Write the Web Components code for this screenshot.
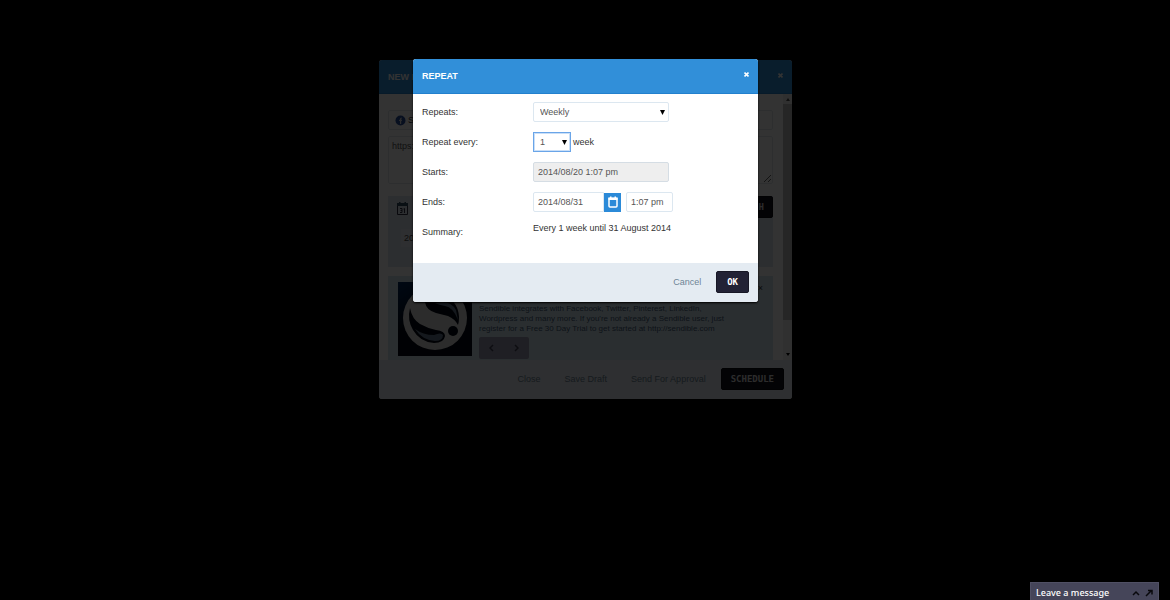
<!DOCTYPE html>
<html lang="en">
<head>
<meta charset="utf-8">
<title>Repeat</title>
<style>
html, body { margin: 0; background: #000; }
body { font: 9px/12px "Liberation Sans", Arial, sans-serif; color: #333; }
</style>
</head>
<body>
<schedule-page></schedule-page>
<script>
const define = (name, html) => customElements.define(name, class extends HTMLElement {
  constructor() {
    super();
    const t = document.createElement("template");
    t.innerHTML = html;
    this.attachShadow({ mode: "open" }).append(t.content.cloneNode(true));
  }
});

/* Dialog shell: blue title bar, body, pale footer */
define("app-dialog", `
<style>
:host { display: flex; flex-direction: column; box-sizing: border-box; border-radius: 3px; overflow: hidden; background: #fff; }
header { display: flex; justify-content: space-between; align-items: flex-start; box-sizing: border-box; height: var(--head, 35px); padding: 11px 9px 0; background: #318fd9; color: #fff; border-bottom: 1px solid #2380cd; }
h2 { margin: 0; font: bold 9px/12px "Liberation Sans", Arial, sans-serif; }
header button { display: block; border: 0; padding: 1px 0 0; background: none; color: #fff; }
header svg { display: block; }
main { flex: 1; min-height: 0; display: flex; flex-direction: column; }
footer { display: flex; align-items: center; justify-content: flex-end; box-sizing: border-box; height: 39px; background: #e4ebf2; padding: 0 var(--end, 9px) 1px; }
</style>
<header><h2><slot name="title"></slot></h2><button aria-label="Close"><svg width="5" height="7"><path d="M.5 1.500l4 4M4.500 1.500l-4 4" stroke="#fff" stroke-width="1.600"/></svg></button></header>
<main><slot></slot></main>
<footer><slot name="footer"></slot></footer>`);

define("dark-button", `
<style>
:host { display: block; }
button { display: block; height: 22px; border: 1px solid #171725; border-radius: 2px; background: #222235; color: #fff; padding: 0 var(--pad, 9px); font: bold 9px/12px "DejaVu Sans Mono", monospace; }
:host([dim]) button { background: #12121c; border-color: #0a0a10; color: #ddd; }
</style><button><slot></slot></button>`);

define("text-button", `
<style>button { border: 0; padding: 0; background: none; color: #6e8495; font: 9px/12px "Liberation Sans", Arial, sans-serif; }</style>
<button><slot></slot></button>`);

define("repeat-form", `
<style>
:host { display: block; padding: 8px 9px 0; }
form { display: grid; grid-template-columns: 111px 1fr; grid-auto-rows: 20px; row-gap: 10px; align-items: center; }
.row { display: flex; align-items: center; }
input, select { box-sizing: border-box; height: 20px; margin: 0; border: 1px solid #dce7f0; border-radius: 2px; background: #fff; color: #555; padding: 0 4px; font: 9px/12px "Liberation Sans", Arial, sans-serif; outline: 0; }
select { appearance: none; padding: 0 6px; }
.select { position: relative; display: flex; }
.select svg { position: absolute; right: 4px; top: 8px; pointer-events: none; }
.wide { width: 136px; }
#every { width: 38px; border-color: #6aa5e8; box-shadow: inset 0 0 0 1px #c9dff8; border-radius: 0; }
.unit { margin-left: 2px; }
#starts { background: #eee; border-color: #d5dde4; }
#ends { width: 71px; border-radius: 2px 0 0 2px; }
.pick { width: 17px; height: 19px; border: 0; padding: 0; margin-right: 5px; background: #2b8ad8; display: grid; place-items: center; }
#time { width: 47px; }
output { align-self: start; }
svg { display: block; }
</style>
<form>
<label for="repeats">Repeats:</label>
<div class="row"><span class="select"><select id="repeats" class="wide"><option>Weekly</option></select><svg width="5" height="5"><path d="M0 0h5L2.500 5z"/></svg></span></div>
<label for="every">Repeat every:</label>
<div class="row"><span class="select"><select id="every"><option>1</option></select><svg width="5" height="5"><path d="M0 0h5L2.500 5z"/></svg></span><span class="unit">week</span></div>
<label for="starts">Starts:</label>
<div class="row"><input id="starts" class="wide" value="2014/08/20 1:07 pm" readonly></div>
<label for="ends">Ends:</label>
<div class="row"><input id="ends" value="2014/08/31"><button type="button" class="pick" aria-label="Pick a date"><svg width="10" height="12" viewBox="0 0 10 12"><path d="M1 2.500h8v7.500q0 1-1 1H2q-1 0-1-1z" fill="none" stroke="#fff" stroke-width="1.500"/><path d="M.5 1.500h9v2.500h-9zM2 .5h1.500v2H2zM6.500 .5H8v2H6.500z" fill="#fff"/></svg></button><input id="time" aria-label="End time" value="1:07 pm"></div>
<label for="summary">Summary:</label>
<output id="summary">Every 1 week until 31 August 2014</output>
</form>`);

define("message-form", `
<style>
:host { flex: 1; min-height: 0; display: flex; }
.content { flex: 1; min-width: 0; overflow: hidden; padding: 16px 10px 0 9px; display: flex; flex-direction: column; }
.content > * { box-sizing: border-box; flex: none; }
.services { height: 20px; border: 1px solid #e0e5ea; border-radius: 2px; padding: 0 6px; display: flex; align-items: center; gap: 2px; }
textarea { height: 48px; margin: 6px 0 0; border: 1px solid #e0e5ea; border-radius: 2px; padding: 3px; background: none; color: #555; font: 9px/12px "Liberation Sans", Arial, sans-serif; resize: vertical; }
.schedule { height: 71px; margin-top: 12px; background: #dce4ee; display: flex; justify-content: space-between; align-items: flex-start; padding: 0 0 0 9px; }
.schedule svg { display: block; margin-top: 6px; }
.date { margin: 14px 0 0 4px; padding: 3px; background: #e6ebf2; color: #444; }
.preview { height: 86px; margin-top: 9px; background: #d3e6f0; display: flex; gap: 7px; padding: 6px 10px 0; }
.text { flex: 1; }
.dismiss { height: 22px; text-align: right; }
p { margin: 0; font-size: 8px; line-height: 10px; color: #47607a; white-space: nowrap; }
.pager { box-sizing: border-box; display: flex; justify-content: space-between; align-items: center; width: 50px; height: 22px; padding: 0 10px; margin-top: 3px; background: #9b9bb2; border-radius: 2px; }
.pager button { border: 0; padding: 0; background: none; height: 8px; }
.pager svg { display: block; }
.bar { width: 9px; background: #f1f1f1; display: flex; flex-direction: column; }
.bar i { height: 10px; display: grid; place-items: center; }
.bar i::after { content: ""; border: 2px solid transparent; border-bottom: 3px solid #505050; border-top: 0; }
.bar i.down { height: 12px; }
.bar i.down::after { border-bottom: 0; border-top: 3px solid #000; }
.thumb { height: 216px; background: #bcbcbc; margin-bottom: auto; }
</style>
<div class="content">
<div class="services"><svg width="11" height="11" viewBox="0 0 11 11"><circle cx="5.500" cy="5.500" r="5" fill="#234b9b"/><path d="M5 9V6H4V4.800h1V4q0-1.600 1.700-1.500v1.200Q6 3.700 6.200 4.800H7L6.800 6h-.6v3z" fill="#ddd"/></svg><span>S</span></div>
<textarea aria-label="Message">https:</textarea>
<div class="schedule"><div><svg width="11" height="13" viewBox="0 0 11 13"><path d="M.5 1.500h10v11H.5z" fill="none" stroke="#303044"/><path d="M0 1h11v3H0zM2 0h1.500v2H2zM7.500 0H9v2H7.500z" fill="#304a60"/><path d="M3 6.500h2v4H3M3.500 8.500H5M6.500 7l1-.5v4.500" fill="none" stroke="#303044"/></svg><div class="date">20</div></div><dark-button dim style="--pad:8px">H</dark-button></div>
<div class="preview">
<svg width="74" height="74" viewBox="0 0 74 74" role="img" aria-label="Sendible"><defs><linearGradient id="n" x2=".6" y2="1"><stop stop-color="#002a60"/><stop offset=".5" stop-color="#020814"/></linearGradient></defs><path fill="url(#n)" d="M0 0h74v74H0z"/><circle cx="37" cy="36" r="32" fill="#ddd"/><path d="M27 20Q29 10 42 12Q60 17 61 35Q61 40 60 43Q57 37 50 34L38 31Q28 28 27 20Z" fill="#020814"/><path d="M37 21Q52 17 58 28L60 38Q55 25 47 24Q41 23 37 21Z" fill="#66798f"/><path d="M12 26Q14 37 22 42Q29 46 38 48Q47 49 47 54Q46 61 36 61Q22 60 15 48Q9 38 12 26Z" fill="#020814"/><path d="M17 47Q25 53 36 53Q43 50 45 53Q45 59 37 59Q24 58 17 47Z" fill="#66798f"/><circle cx="55" cy="49" r="5" fill="#020814"/></svg>
<div class="text"><div class="dismiss">×</div><p>Sendible integrates with Facebook, Twitter, Pinterest, LinkedIn,<br>Wordpress and many more. If you're not already a Sendible user, just<br>register for a Free 30 Day Trial to get started at http://sendible.com</p>
<div class="pager"><button aria-label="Previous"><svg width="5" height="8"><path d="M4 1L1 4l3 3" fill="none" stroke="#444458" stroke-width="1.500"/></svg></button><button aria-label="Next"><svg width="5" height="8"><path d="M1 1l3 3-3 3" fill="none" stroke="#444458" stroke-width="1.500"/></svg></button></div></div>
</div>
</div>
<div class="bar"><i></i><div class="thumb"></div><i class="down"></i></div>`);

define("chat-tab", `
<style>
:host { display: flex; align-items: center; box-sizing: border-box; width: 129px; height: 18px; padding: 0 5px; background: #454559; border: 1px solid #505064; border-bottom: 0; color: #fff; }
span { flex: 1; font: 500 9px/12px "Noto Sans", Verdana, sans-serif; padding-top: 2px; }
button { border: 0; padding: 2px 0 0; margin-left: 5px; background: none; }
svg { display: block; }
</style>
<span>Leave a message</span>
<button aria-label="Expand"><svg width="8" height="8"><path d="M1 6l3-3 3 3" fill="none" stroke="#08080c" stroke-width="1.500"/></svg></button>
<button aria-label="Open in a window"><svg width="8" height="8"><path d="M1 7l5-5M3 1.500h4v4" fill="none" stroke="#08080c" stroke-width="1.500"/></svg></button>`);

define("schedule-page", `
<style>
:host { display: grid; min-height: 100vh; }
.layer { grid-area: 1 / 1; display: flex; justify-content: center; align-items: flex-start; padding: 60px 0 0 1px; }
.front { padding-top: 59px; background: rgba(0,0,0,.8); z-index: 1; }
.message { width: 413px; height: 339px; --head: 34px; --end: 8px; }
.repeat { width: 345px; height: 243px; box-shadow: 0 1px 2px #000; }
chat-tab { position: fixed; right: 11px; bottom: 0; z-index: 2; }
.message text-button { margin-right: 24px; }
.message text-button:nth-of-type(3) { margin-right: 15px; }
.repeat text-button { margin-right: 15px; }
</style>
<div class="layer"><app-dialog class="message"><span slot="title">NEW M</span><message-form></message-form>
<text-button slot="footer">Close</text-button><text-button slot="footer">Save Draft</text-button><text-button slot="footer">Send For Approval</text-button><dark-button slot="footer" dim>SCHEDULE</dark-button></app-dialog></div>
<div class="layer front"><app-dialog class="repeat"><span slot="title">REPEAT</span><repeat-form></repeat-form>
<text-button slot="footer">Cancel</text-button><dark-button slot="footer" style="--pad:10px">OK</dark-button></app-dialog></div>
<chat-tab></chat-tab>`);
</script>
</body>
</html>
